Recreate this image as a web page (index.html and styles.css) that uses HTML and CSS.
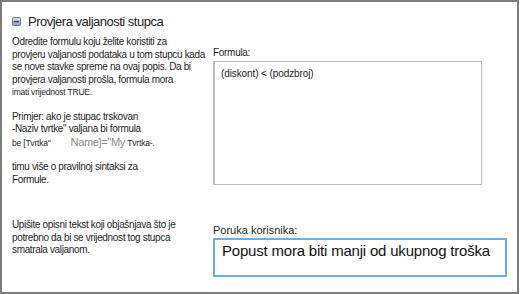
FILE: index.html
```html
<!DOCTYPE html>
<html lang="hr">
<head>
  <meta charset="UTF-8" />
  <title>Provjera valjanosti stupca</title>
  <link rel="stylesheet" href="styles.css">
</head>
<body>
  <div class="panel">
    <!-- Section heading with collapse icon -->
    <div class="head">
      <svg class="toggle" width="9" height="9" viewBox="0 0 9 9">
        <defs>
          <linearGradient id="g" x1="0" y1="0" x2="0" y2="1">
            <stop offset="0" stop-color="#dde5f0"/>
            <stop offset="1" stop-color="#8c9bb4"/>
          </linearGradient>
        </defs>
        <rect x="0.5" y="0.5" width="8" height="8" rx="1" fill="url(#g)" stroke="#6a7892"/>
        <rect x="2" y="4" width="5" height="1.2" fill="#2f3b52"/>
      </svg>
      <span>Provjera valjanosti stupca</span>
    </div>

    <!-- Formula row -->
    <div class="row row-formula">
      <div class="desc">
        <p>Odredite formulu koju želite koristiti za<br>
          provjeru valjanosti podataka u tom stupcu kada<br>
          se nove stavke spreme na ovaj popis. Da bi<br>
          provjera valjanosti prošla, formula mora<br>
          <span class="tiny">imati vrijednost TRUE.</span></p>
        <p>Primjer: ako je stupac trskovan<br>
          -Naziv tvrtke" valjana bi formula<br>
          <span class="tiny">be [Tvrtka"</span><span class="ghost">Name]="My</span> <span class="tiny">Tvrtka-.</span></p>
        <p>timu više o pravilnoj sintaksi za<br>
          Formule.</p>
      </div>
      <div class="field">
        <label class="lbl">Formula:</label>
        <div class="box formula">(diskont) &lt; (podzbroj)</div>
      </div>
    </div>

    <!-- User message row -->
    <div class="row row-msg">
      <div class="desc">
        <p>Upišite opisni tekst koji objašnjava što je<br>
          potrebno da bi se vrijednost tog stupca<br>
          smatrala valjanom.</p>
      </div>
      <div class="field">
        <label class="lbl lbl-big">Poruka korisnika:</label>
        <div class="box message">Popust mora biti manji od ukupnog troška</div>
      </div>
    </div>
  </div>
</body>
</html>
```

FILE: styles.css
```css
body {
  margin: 0;
  font-family: "Liberation Sans", Arial, sans-serif;
  background: #fff;
  color: #222;
}
.panel {
  box-sizing: border-box;
  width: 519px;
  height: 294px;
  border: 2px solid #7d7d7d;
  padding: 0 10px;
}
.head {
  display: flex;
  align-items: center;
  gap: 7px;
  margin-top: 11px;
  height: 16px;
  font-size: 13px;
  letter-spacing: -0.5px;
  color: #1e1e1e;
}
.toggle {
  display: block;
  margin-top: 1px;
}
.row {
  display: flex;
}
.desc {
  width: 201px;
  flex: none;
  font-size: 10px;
  letter-spacing: -0.35px;
  line-height: 12.5px;
  color: #262626;
}
.desc p {
  margin: 0 0 12px;
}
.tiny {
  font-size: 8.5px;
  letter-spacing: -0.2px;
}
.ghost {
  color: #8a8a8a;
  font-size: 11px;
  margin-left: 20px;
}
.field {
  display: flex;
  flex-direction: column;
}
.lbl {
  font-size: 10px;
  letter-spacing: -0.3px;
  line-height: 12px;
  height: 12px;
  margin-bottom: 2px;
  color: #1e1e1e;
}
.lbl-big {
  font-size: 11px;
  letter-spacing: 0;
}
.box {
  box-sizing: border-box;
}
.formula {
  width: 269px;
  height: 124px;
  border: 1px solid #bdbdbd;
  border-left-width: 2px;
  padding: 6px 6px;
  font-size: 10px;
  letter-spacing: -0.1px;
  color: #1e1e1e;
}
.row-formula {
  margin-top: 7px;
}
.row-formula .field {
  padding-top: 11px;
}
.row-msg {
  margin-top: 21px;
}
.row-msg .field {
  padding-top: 5px;
}
.message {
  width: 294px;
  height: 39px;
  border: 2px solid #6aaee9;
  padding: 2px 7px;
  font-size: 15px;
  letter-spacing: -0.2px;
  color: #111;
}
```
